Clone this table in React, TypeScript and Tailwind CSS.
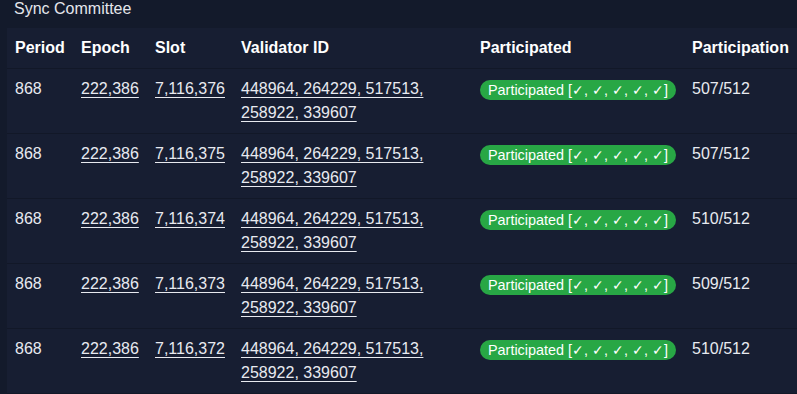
const ROWS = [
  { slot: "7,116,376", part: "507/512" },
  { slot: "7,116,375", part: "507/512" },
  { slot: "7,116,374", part: "510/512" },
  { slot: "7,116,373", part: "509/512" },
  { slot: "7,116,372", part: "510/512" },
];

const linkCls = "underline underline-offset-[3px] decoration-1 text-[#e8eaf0]";

export default function App() {
  return (
    <div
      className="w-[797px] h-[394px] overflow-hidden bg-[#131a2b] text-[#e8eaf0]"
      style={{ fontFamily: '"Liberation Sans", Arial, sans-serif' }}
    >
      <h1 className="pl-[14px] text-[16px] leading-[17px] font-normal text-[#e4e6ec]">Sync Committee</h1>

      <div className="mt-[11px] ml-[7px] w-[800px]">
        <table className="table-fixed w-[797px] border-collapse bg-[#171e32] text-[16px] leading-6">
          <colgroup>
            <col className="w-[66px]" />
            <col className="w-[74px]" />
            <col className="w-[86px]" />
            <col className="w-[239px]" />
            <col className="w-[212px]" />
            <col className="w-[120px]" />
          </colgroup>
          <thead>
            <tr className="border-b border-[#121828] text-left text-white">
              <th className="px-2 py-2 font-bold">Period</th>
              <th className="px-2 py-2 font-bold">Epoch</th>
              <th className="px-2 py-2 font-bold">Slot</th>
              <th className="px-2 py-2 font-bold">Validator ID</th>
              <th className="px-2 py-2 font-bold">Participated</th>
              <th className="px-2 py-2 font-bold whitespace-nowrap">Participation</th>
            </tr>
          </thead>
          <tbody>
            {ROWS.map((r) => (
              <tr key={r.slot} className="border-b border-[#121828] align-top">
                <td className="px-2 py-2">868</td>
                <td className="px-2 py-2">
                  <a className={linkCls}>222,386</a>
                </td>
                <td className="px-2 py-2">
                  <a className={linkCls}>{r.slot}</a>
                </td>
                <td className="px-2 py-2">
                  <a className={linkCls}>448964, 264229, 517513, 258922, 339607</a>
                </td>
                <td className="px-2 py-2 whitespace-nowrap">
                  <span className="inline-block align-middle rounded-full bg-[#28a745] px-2 text-[14.4px] leading-5 text-white">
                    Participated [✓, ✓, ✓, ✓, ✓]
                  </span>
                </td>
                <td className="px-2 py-2">{r.part}</td>
              </tr>
            ))}
          </tbody>
        </table>
      </div>
    </div>
  );
}
